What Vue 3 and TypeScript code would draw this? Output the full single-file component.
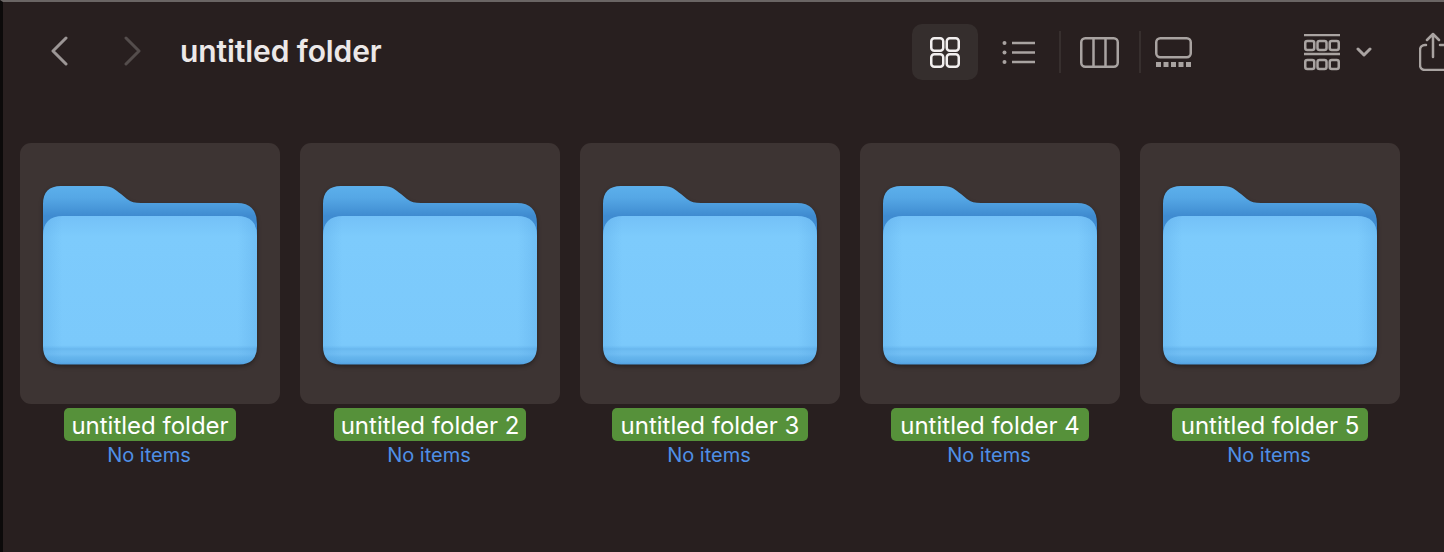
<script setup lang="ts">
const folders = [
  'untitled folder',
  'untitled folder 2',
  'untitled folder 3',
  'untitled folder 4',
  'untitled folder 5',
]
</script>

<template>
  <div class="finder">
    <header class="toolbar">
      <svg class="nav back" width="18" height="30" viewBox="0 0 18 30">
        <path d="M16 2 3 15l13 13" />
      </svg>
      <svg class="nav forward" width="18" height="30" viewBox="0 0 18 30">
        <path d="m2 2 13 13L2 28" />
      </svg>
      <h1 class="title">untitled folder</h1>

      <div class="views">
        <button class="view active">
          <svg width="30" height="31" viewBox="0 0 30 31">
            <rect x="1.250" y="1.250" width="12" height="12.500" rx="3" />
            <rect x="16.750" y="1.250" width="12" height="12.500" rx="3" />
            <rect x="1.250" y="17.250" width="12" height="12.500" rx="3" />
            <rect x="16.750" y="17.250" width="12" height="12.500" rx="3" />
          </svg>
        </button>
        <svg class="icon list" width="33" height="23" viewBox="0 0 33 23">
          <circle class="fill" cx="2.500" cy="2" r="2" />
          <circle class="fill" cx="2.500" cy="11.500" r="2" />
          <circle class="fill" cx="2.500" cy="21" r="2" />
          <path d="M10 2h23M10 11.500h23M10 21h23" />
        </svg>
        <span class="sep first"></span>
        <svg class="icon columns" width="39" height="31" viewBox="0 0 39 31">
          <rect x="1.250" y="1.250" width="36.500" height="28.500" rx="4" />
          <path d="M13.500 1v29M25.500 1v29" />
        </svg>
        <span class="sep second"></span>
        <svg class="icon gallery" width="37" height="30" viewBox="0 0 37 30">
          <rect x="1.250" y="1.250" width="34.500" height="19" rx="4" />
          <rect class="fill" x="1" y="25" width="5" height="5" />
          <rect class="fill" x="8.500" y="25" width="5" height="5" />
          <rect class="fill" x="16" y="25" width="5" height="5" />
          <rect class="fill" x="23.500" y="25" width="5" height="5" />
          <rect class="fill" x="31" y="25" width="5" height="5" />
        </svg>
      </div>

      <svg class="icon group" width="36" height="37" viewBox="0 0 36 37">
        <path d="M0 1h36M0 20h36" />
        <rect x="1.250" y="7" width="9" height="9" rx="2" />
        <rect x="13.500" y="7" width="9" height="9" rx="2" />
        <rect x="25.750" y="7" width="9" height="9" rx="2" />
        <rect x="1.250" y="26" width="9" height="9" rx="2" />
        <rect x="13.500" y="26" width="9" height="9" rx="2" />
        <rect x="25.750" y="26" width="9" height="9" rx="2" />
      </svg>
      <svg class="icon chevron" width="16" height="10" viewBox="0 0 16 10">
        <path d="m2 2 6 6 6-6" />
      </svg>
      <svg class="icon share" width="25" height="39" viewBox="0 0 25 39">
        <path d="M7 13H6a5 5 0 0 0-5 5v15a5 5 0 0 0 5 5h19M21 13h4M14 25V2M8 8l6-6 6 6" />
      </svg>
    </header>

    <main class="grid">
      <div v-for="(name, i) in folders" :key="name" class="item">
        <div class="tile">
          <svg class="folder" width="214" height="179" viewBox="0 0 214 179">
            <defs>
              <linearGradient :id="`back-${i}`" x1="0" y1="0" x2="0" y2="1">
                <stop offset="0" stop-color="#5cafeb" />
                <stop offset="0.12" stop-color="#55a7e5" />
                <stop offset="0.3" stop-color="#3f8bd0" />
              </linearGradient>
              <linearGradient :id="`front-${i}`" x1="0" y1="0" x2="0" y2="1">
                <stop offset="0" stop-color="#74c1f7" />
                <stop offset="0.14" stop-color="#7dcbfc" />
                <stop offset="0.87" stop-color="#7bc9fb" />
                <stop offset="0.885" stop-color="#71c0f5" />
                <stop offset="0.895" stop-color="#69b7ee" />
                <stop offset="0.91" stop-color="#70bef3" />
                <stop offset="0.93" stop-color="#72bff4" />
                <stop offset="0.95" stop-color="#66b6ed" />
                <stop offset="0.985" stop-color="#5cabe7" />
                <stop offset="1" stop-color="#4f9fe0" />
              </linearGradient>
              <linearGradient :id="`edge-${i}`" x1="0" y1="0" x2="1" y2="0">
                <stop offset="0" stop-color="#4f9fe0" stop-opacity="0.28" />
                <stop offset="0.09" stop-color="#4f9fe0" stop-opacity="0" />
                <stop offset="0.91" stop-color="#4f9fe0" stop-opacity="0" />
                <stop offset="1" stop-color="#4f9fe0" stop-opacity="0.28" />
              </linearGradient>
            </defs>
            <path
              :fill="`url(#back-${i})`"
              d="M0 18Q0 0 18 0H60C70 0 72 4 78 8L84 13C88 16 92 17 98 17H194Q214 17 214 38V100H0Z"
            />
            <path
              :fill="`url(#front-${i})`"
              d="M0 50Q0 30 20 30H194Q214 30 214 50V160Q214 178.500 196 178.500H18Q0 178.500 0 160Z"
            />
            <path
              :fill="`url(#edge-${i})`"
              d="M0 50Q0 30 20 30H194Q214 30 214 50V160Q214 178.500 196 178.500H18Q0 178.500 0 160Z"
            />
          </svg>
        </div>
        <span class="name" :class="{ wide: i > 1 }">{{ name }}</span>
        <span class="meta">No items</span>
      </div>
    </main>
  </div>
</template>

<style>
html,
body {
  margin: 0;
  background: #281f1f;
}
</style>

<style scoped>
.finder {
  box-sizing: border-box;
  width: 1444px;
  height: 552px;
  overflow: hidden;
  background: #281f1f;
  border-top: 2px solid #6a6564;
  border-left: 3px solid #0c0a0a;
  font-family: Inter, "Liberation Sans", sans-serif;
}

.toolbar {
  display: flex;
  align-items: center;
  height: 100px;
  padding-left: 47px;
}

.nav {
  flex: none;
  margin-top: -2px;
  fill: none;
  stroke-width: 3;
  stroke-linecap: round;
  stroke-linejoin: round;
}

.back {
  stroke: #9c9695;
}

.forward {
  margin-left: 56px;
  stroke: #544d4c;
}

.title {
  flex: none;
  width: 732px;
  margin: -2px 0 0 38px;
  font-size: 30px;
  font-weight: 600;
  letter-spacing: -0.1px;
  color: #ece8e8;
}

.views {
  display: flex;
  align-items: center;
  flex: none;
}

.view {
  display: flex;
  align-items: center;
  justify-content: center;
  width: 66px;
  height: 56px;
  padding: 0;
  border: 0;
  border-radius: 10px;
  background: #352e2d;
}

.view svg {
  fill: none;
  stroke: #f2efef;
  stroke-width: 2.500;
}

.icon {
  flex: none;
  fill: none;
  stroke: #a9a3a1;
  stroke-width: 2.500;
}

.icon .fill {
  fill: #a9a3a1;
  stroke: none;
}

.list {
  margin-left: 24px;
}

.sep {
  width: 2px;
  height: 42px;
  flex: none;
  background: #372f2e;
}

.first {
  margin-left: 24px;
}

.columns {
  margin-left: 19px;
}

.second {
  margin-left: 20px;
}

.gallery {
  margin-left: 14px;
}

.group {
  margin-left: 112px;
}

.chevron {
  margin-left: 16px;
  stroke-width: 3;
  stroke-linecap: round;
  stroke-linejoin: round;
}

.share {
  margin: -2px 0 0 47px;
  stroke-linecap: round;
  stroke-linejoin: round;
}

.grid {
  display: flex;
  gap: 20px;
  padding: 41px 0 0 17px;
}

.item {
  display: flex;
  flex-direction: column;
  align-items: center;
  width: 260px;
}

.tile {
  box-sizing: border-box;
  width: 260px;
  height: 261px;
  padding-top: 43px;
  border-radius: 11px;
  background: #3d3433;
  display: flex;
  justify-content: center;
}

.folder {
  filter: drop-shadow(0 2px 2px rgba(0, 0, 0, 0.35));
}

.name {
  margin-top: 4px;
  padding: 0 7px;
  height: 33px;
  line-height: 35px;
  border-radius: 5px;
  background: #56913a;
  color: #fff;
  font-size: 24px;
  white-space: nowrap;
}

.name.wide {
  padding: 0 9px;
}

.meta {
  margin: 1px 2px 0 0;
  color: #4f8fe6;
  font-size: 20px;
  line-height: 26px;
}
</style>
